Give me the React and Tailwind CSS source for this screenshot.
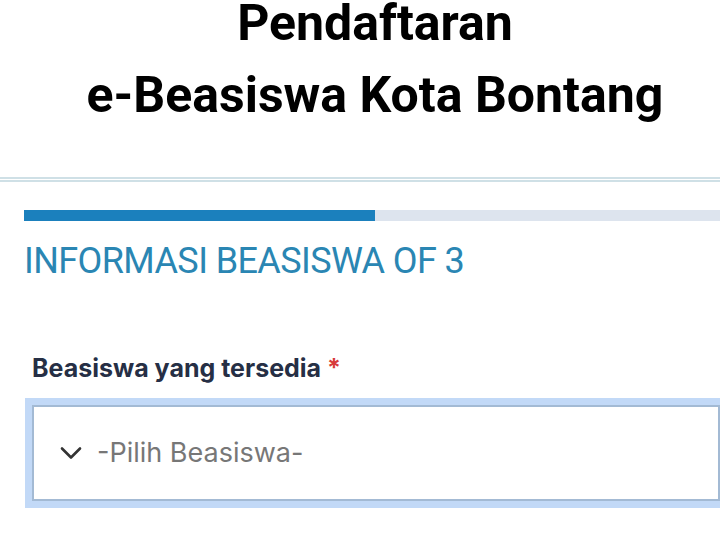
export default function App() {
    return (
        <div className="w-[720px] h-[540px] overflow-hidden bg-white">
            {/* Title */}
            <header className="pl-[30px] text-center font-['Roboto',sans-serif] font-bold text-black text-[50px]">
                <h1 className="leading-[46px]">Pendaftaran</h1>
                <h1 className="mt-[13px] leading-[72px]">e-Beasiswa Kota Bontang</h1>
            </header>

            {/* Double rule */}
            <div className="mt-[46px] h-[5px] border-t-[2px] border-b-[2px] border-[#cfe0e6]" />

            <section className="pl-6 pt-[28px]">
                {/* Progress */}
                <div className="flex h-[11px] bg-[#dde4ee]">
                    <div className="w-[351px] bg-[#1b80bd]" />
                </div>

                <h2 className="mt-[20px] font-['Roboto',sans-serif] text-[36px] leading-[40px] tracking-[-0.6px] text-[#2a86b3]">
                    INFORMASI BEASISWA OF 3
                </h2>

                <label className="block mt-[72px] pl-2 font-['Inter',sans-serif] font-bold text-[25px] leading-[30px] text-[#262f45]">
                    Beasiswa yang tersedia <span className="text-[#d73a3a]">*</span>
                </label>

                {/* Select */}
                <div className="mt-[15px] ml-[1px] w-[702px] p-[7px] bg-[#c2d9f7]">
                    <div className="flex items-center h-[96px] pl-[26px] border-2 border-[#a3bad4] bg-white">
                        <svg width="22" height="14" viewBox="0 0 22 14" fill="none" stroke="#333" strokeWidth="2.6" strokeLinecap="round" strokeLinejoin="round">
                            <path d="M2 2.5 L11 11.5 L20 2.5" />
                        </svg>
                        <span className="ml-[15px] font-['Inter',sans-serif] text-[27px] text-[#777]">-Pilih Beasiswa-</span>
                    </div>
                </div>
            </section>
        </div>
    );
}
